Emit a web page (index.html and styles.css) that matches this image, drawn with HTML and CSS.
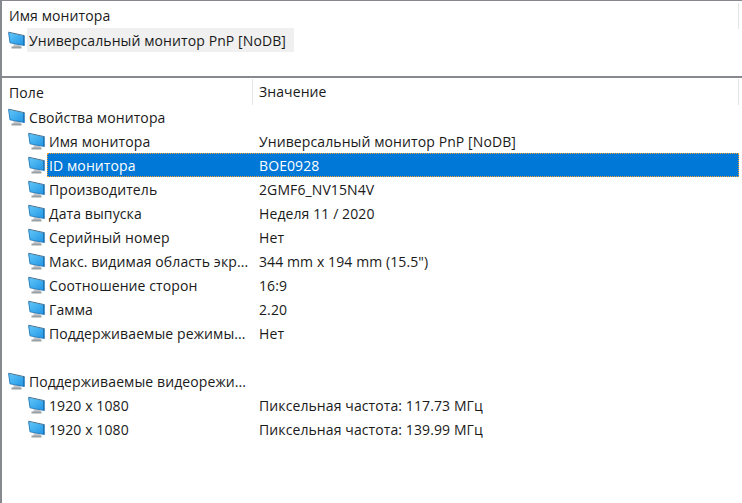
FILE: index.html
```html
<!DOCTYPE html>
<html lang="ru">
<head>
<meta charset="utf-8">
<title>Монитор</title>
<link rel="stylesheet" href="styles.css">
</head>
<body>
<svg class="defs" width="0" height="0" aria-hidden="true">
  <defs>
    <linearGradient id="scr" x1="0" y1="0" x2="1" y2="1">
      <stop offset="0" stop-color="#62c8f8"/>
      <stop offset="1" stop-color="#1f93e4"/>
    </linearGradient>
    <symbol id="mon" viewBox="0 0 17 18">
      <path d="M5.5 13h7v3h-7z" fill="#c3c7ca"/>
      <path d="M3.5 15.5h10v2h-10z" fill="#9a9fa3"/>
      <path d="M0.5 1.5 16.5 5v9.5L2 11.8z" fill="url(#scr)"/>
      <path d="M0.5 1.2 16.5 4.7" stroke="#45708f" stroke-width="1" fill="none"/>
      <path d="M15.9 4.7v9.6" stroke="#1c6aa8" stroke-width="1.3" fill="none"/>
      <path d="M0.6 1.5 2 11.8 16.5 14.5" stroke="#1f78bd" stroke-width=".9" fill="none"/>
    </symbol>
  </defs>
</svg>
<main class="panel">
  <section class="top">
    <div class="top-head"><span class="top-title">Имя монитора</span><span class="edge"></span></div>
    <div class="top-row">
      <svg class="ico"><use href="#mon"/></svg>
      <span class="top-name">Универсальный монитор PnP [NoDB]</span>
    </div>
  </section>
  <section class="list">
    <div class="head">
      <span class="c1">Поле</span>
      <span class="c2 sep">Значение</span>
      <span class="edge"></span>
    </div>
    <div class="row"><span class="c1"><svg class="ico"><use href="#mon"/></svg><span class="lbl">Свойства монитора</span></span></div>
    <div class="row sub"><span class="c1"><svg class="ico"><use href="#mon"/></svg><span class="lbl">Имя монитора</span></span><span class="c2">Универсальный монитор PnP [NoDB]</span></div>
    <div class="row sub"><span class="c1 sel-ico"><svg class="ico"><use href="#mon"/></svg></span><span class="selbar"><span class="s1">ID монитора</span><span class="s2">BOE0928</span></span></div>
    <div class="row sub"><span class="c1"><svg class="ico"><use href="#mon"/></svg><span class="lbl">Производитель</span></span><span class="c2">2GMF6_NV15N4V</span></div>
    <div class="row sub"><span class="c1"><svg class="ico"><use href="#mon"/></svg><span class="lbl">Дата выпуска</span></span><span class="c2">Неделя 11 / 2020</span></div>
    <div class="row sub"><span class="c1"><svg class="ico"><use href="#mon"/></svg><span class="lbl">Серийный номер</span></span><span class="c2">Нет</span></div>
    <div class="row sub"><span class="c1"><svg class="ico"><use href="#mon"/></svg><span class="lbl">Макс. видимая область экр...</span></span><span class="c2">344 mm x 194 mm (15.5")</span></div>
    <div class="row sub"><span class="c1"><svg class="ico"><use href="#mon"/></svg><span class="lbl">Соотношение сторон</span></span><span class="c2">16:9</span></div>
    <div class="row sub"><span class="c1"><svg class="ico"><use href="#mon"/></svg><span class="lbl">Гамма</span></span><span class="c2">2.20</span></div>
    <div class="row sub"><span class="c1"><svg class="ico"><use href="#mon"/></svg><span class="lbl">Поддерживаемые режимы...</span></span><span class="c2">Нет</span></div>
    <div class="row"></div>
    <div class="row"><span class="c1"><svg class="ico"><use href="#mon"/></svg><span class="lbl">Поддерживаемые видеорежи...</span></span></div>
    <div class="row sub"><span class="c1"><svg class="ico"><use href="#mon"/></svg><span class="lbl">1920 x 1080</span></span><span class="c2">Пиксельная частота: 117.73 МГц</span></div>
    <div class="row sub"><span class="c1"><svg class="ico"><use href="#mon"/></svg><span class="lbl">1920 x 1080</span></span><span class="c2">Пиксельная частота: 139.99 МГц</span></div>
  </section>
</main>
</body>
</html>
```
FILE: styles.css
```css
* { box-sizing: border-box; }
html, body { margin: 0; height: 100%; background: #fff; }
body { font-family: "Open Sans", "Noto Sans", "Liberation Sans", sans-serif; font-size: 14px; letter-spacing: .1px; color: #1a1a1a; overflow: hidden; }
.defs { display: block; }
.panel { height: 503px; width: 742px; border-top: 1px solid #868a8e; border-left: 2px solid #868a8e; display: flex; flex-direction: column; }
.top { height: 77px; padding-top: 1px; border-bottom: 2px solid #868a8e; }
.top-head { height: 26px; display: flex; align-items: center; padding-left: 7px; position: relative; }
.top-title { line-height: 27px; }
.edge { position: absolute; right: 3px; top: 1px; width: 1px; height: 26px; background: #e5e5e5; }
.top-row { display: flex; align-items: center; height: 24px; padding-left: 6px; }
.top-name { background: #f0f0f0; height: 24px; line-height: 25px; margin-left: 2px; padding: 0 8px 0 2px; }
.ico { width: 17px; height: 18px; flex: none; display: block; }
.list { flex: 1; }
.head { display: flex; height: 27px; padding-top: 1px; align-items: center; position: relative; }
.head .c1 { width: 250px; padding-left: 7px; flex: none; }
.head .sep { border-left: 1px solid #e5e5e5; height: 26px; line-height: 26px; padding-left: 6px; }
.row { display: flex; height: 24px; align-items: center; }
.row .c1 { width: 250px; flex: none; display: flex; align-items: center; padding-left: 6px; white-space: nowrap; }
.row.sub .c1 { padding-left: 26px; }
.lbl { margin-left: 4px; }
.row .c2 { padding-left: 7px; white-space: nowrap; }
.row.sub .sel-ico { width: 45px; }
.selbar { display: flex; width: 692px; height: 24px; line-height: 23px; background: #0078d7; color: #fff; border: 1px dotted #f0a030; }
.s1 { width: 205px; padding-left: 1px; flex: none; }
.s2 { padding-left: 6px; }
```
